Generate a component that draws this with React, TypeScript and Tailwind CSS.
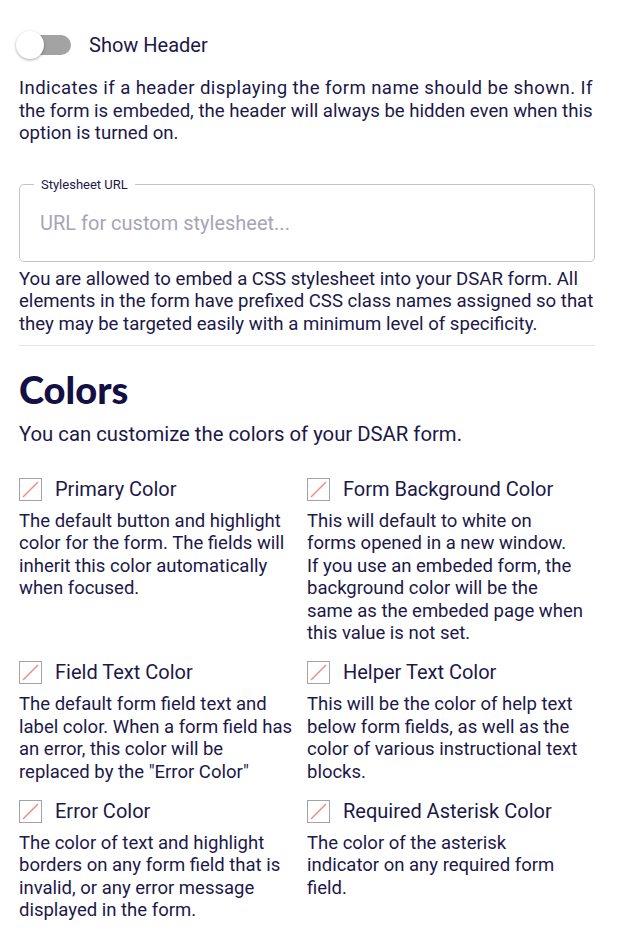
import { useState } from "react";

const colorOptions = [
  {
    label: "Primary Color",
    help: [
      "The default button and highlight",
      "color for the form. The fields will",
      "inherit this color automatically",
      "when focused.",
    ],
  },
  {
    label: "Form Background Color",
    help: [
      "This will default to white on",
      "forms opened in a new window.",
      "If you use an embeded form, the",
      "background color will be the",
      "same as the embeded page when",
      "this value is not set.",
    ],
  },
  {
    label: "Field Text Color",
    help: [
      "The default form field text and",
      "label color. When a form field has",
      "an error, this color will be",
      'replaced by the "Error Color"',
    ],
  },
  {
    label: "Helper Text Color",
    help: [
      "This will be the color of help text",
      "below form fields, as well as the",
      "color of various instructional text",
      "blocks.",
    ],
  },
  {
    label: "Error Color",
    help: [
      "The color of text and highlight",
      "borders on any form field that is",
      "invalid, or any error message",
      "displayed in the form.",
    ],
  },
  {
    label: "Required Asterisk Color",
    help: [
      "The color of the asterisk",
      "indicator on any required form",
      "field.",
    ],
  },
];

function Lines({ lines }: { lines: string[] }) {
  return (
    <>
      {lines.map((l) => (
        <span key={l} className="block whitespace-nowrap">
          {l}
        </span>
      ))}
    </>
  );
}

// broken image placeholder shown where the swatch should be
function Swatch() {
  return (
    <svg width="23" height="23" viewBox="0 0 23 23" className="shrink-0">
      <rect x="0.5" y="0.5" width="22" height="22" fill="white" stroke="#a3a3a3" />
      <line x1="4" y1="19" x2="19" y2="4" stroke="#ef8a80" strokeWidth="1.5" />
    </svg>
  );
}

function Toggle({ on, onChange }: { on: boolean; onChange: (v: boolean) => void }) {
  return (
    <button
      type="button"
      onClick={() => onChange(!on)}
      className="relative w-[56px] h-[30px] shrink-0"
    >
      <span className={`absolute left-[8px] top-[5px] w-[47px] h-[20px] rounded-full ${on ? "bg-[#8f8bd6]" : "bg-[#a3a3a3]"}`} />
      <span
        className={`absolute top-[1px] w-[28px] h-[28px] rounded-full bg-white shadow-[0_1px_3px_rgba(0,0,0,0.35)] ${on ? "left-[27px]" : "left-0"}`}
      />
    </button>
  );
}

export default function App() {
  const [showHeader, setShowHeader] = useState(false);

  return (
    <div className="min-h-screen bg-white text-[#1c1849] font-['Roboto',sans-serif]">
      <div className="w-[576px] ml-[19px] pt-[30px]">
        <div className="flex items-center gap-[17px] -ml-[3px]">
          <Toggle on={showHeader} onChange={setShowHeader} />
          <span className="text-[20px] leading-[30px]">Show Header</span>
        </div>

        <p className="mt-[17px] text-[18.6px] leading-[22.5px]">
          <span className="block whitespace-nowrap tracking-[0.4px]">
            Indicates if a header displaying the form name should be shown. If
          </span>
          <span className="block whitespace-nowrap">
            the form is embeded, the header will always be hidden even when this
          </span>
          <span className="block whitespace-nowrap">option is turned on.</span>
        </p>

        <div className="relative mt-[39px] h-[78px] rounded-[5px] border border-[#c4c4c4]">
          <span className="absolute -top-[9px] left-[14px] bg-white px-[7px] text-[13px] leading-[17px]">
            Stylesheet URL
          </span>
          <input
            type="text"
            placeholder="URL for custom stylesheet..."
            className="w-full h-full bg-transparent px-[20px] text-[20px] outline-none placeholder:text-[#a6a5b6]"
          />
        </div>

        <p className="mt-[6px] text-[18.6px] leading-[22.5px]">
          <Lines
            lines={[
              "You are allowed to embed a CSS stylesheet into your DSAR form. All",
              "elements in the form have prefixed CSS class names assigned so that",
              "they may be targeted easily with a minimum level of specificity.",
            ]}
          />
        </p>

        <hr className="mt-[10px] border-0 border-t border-[#e3e3e3]" />

        <h2 className="mt-[21px] text-[38px] leading-[44px] font-black text-[#140f44] font-['Lato',sans-serif]">
          Colors
        </h2>
        <p className="mt-[10px] text-[20.3px] leading-[26px]">
          You can customize the colors of your DSAR form.
        </p>

        <div className="mt-[31px] grid grid-cols-[288px_288px] gap-y-[17px]">
          {colorOptions.map((opt) => (
            <div key={opt.label} className="pr-[11px]">
              <div className="flex items-center gap-[13px]">
                <Swatch />
                <span className="text-[20px] leading-[23px]">{opt.label}</span>
              </div>
              <p className="mt-[9px] text-[18.5px] leading-[22.4px]">
                <Lines lines={opt.help} />
              </p>
            </div>
          ))}
        </div>
      </div>
    </div>
  );
}
